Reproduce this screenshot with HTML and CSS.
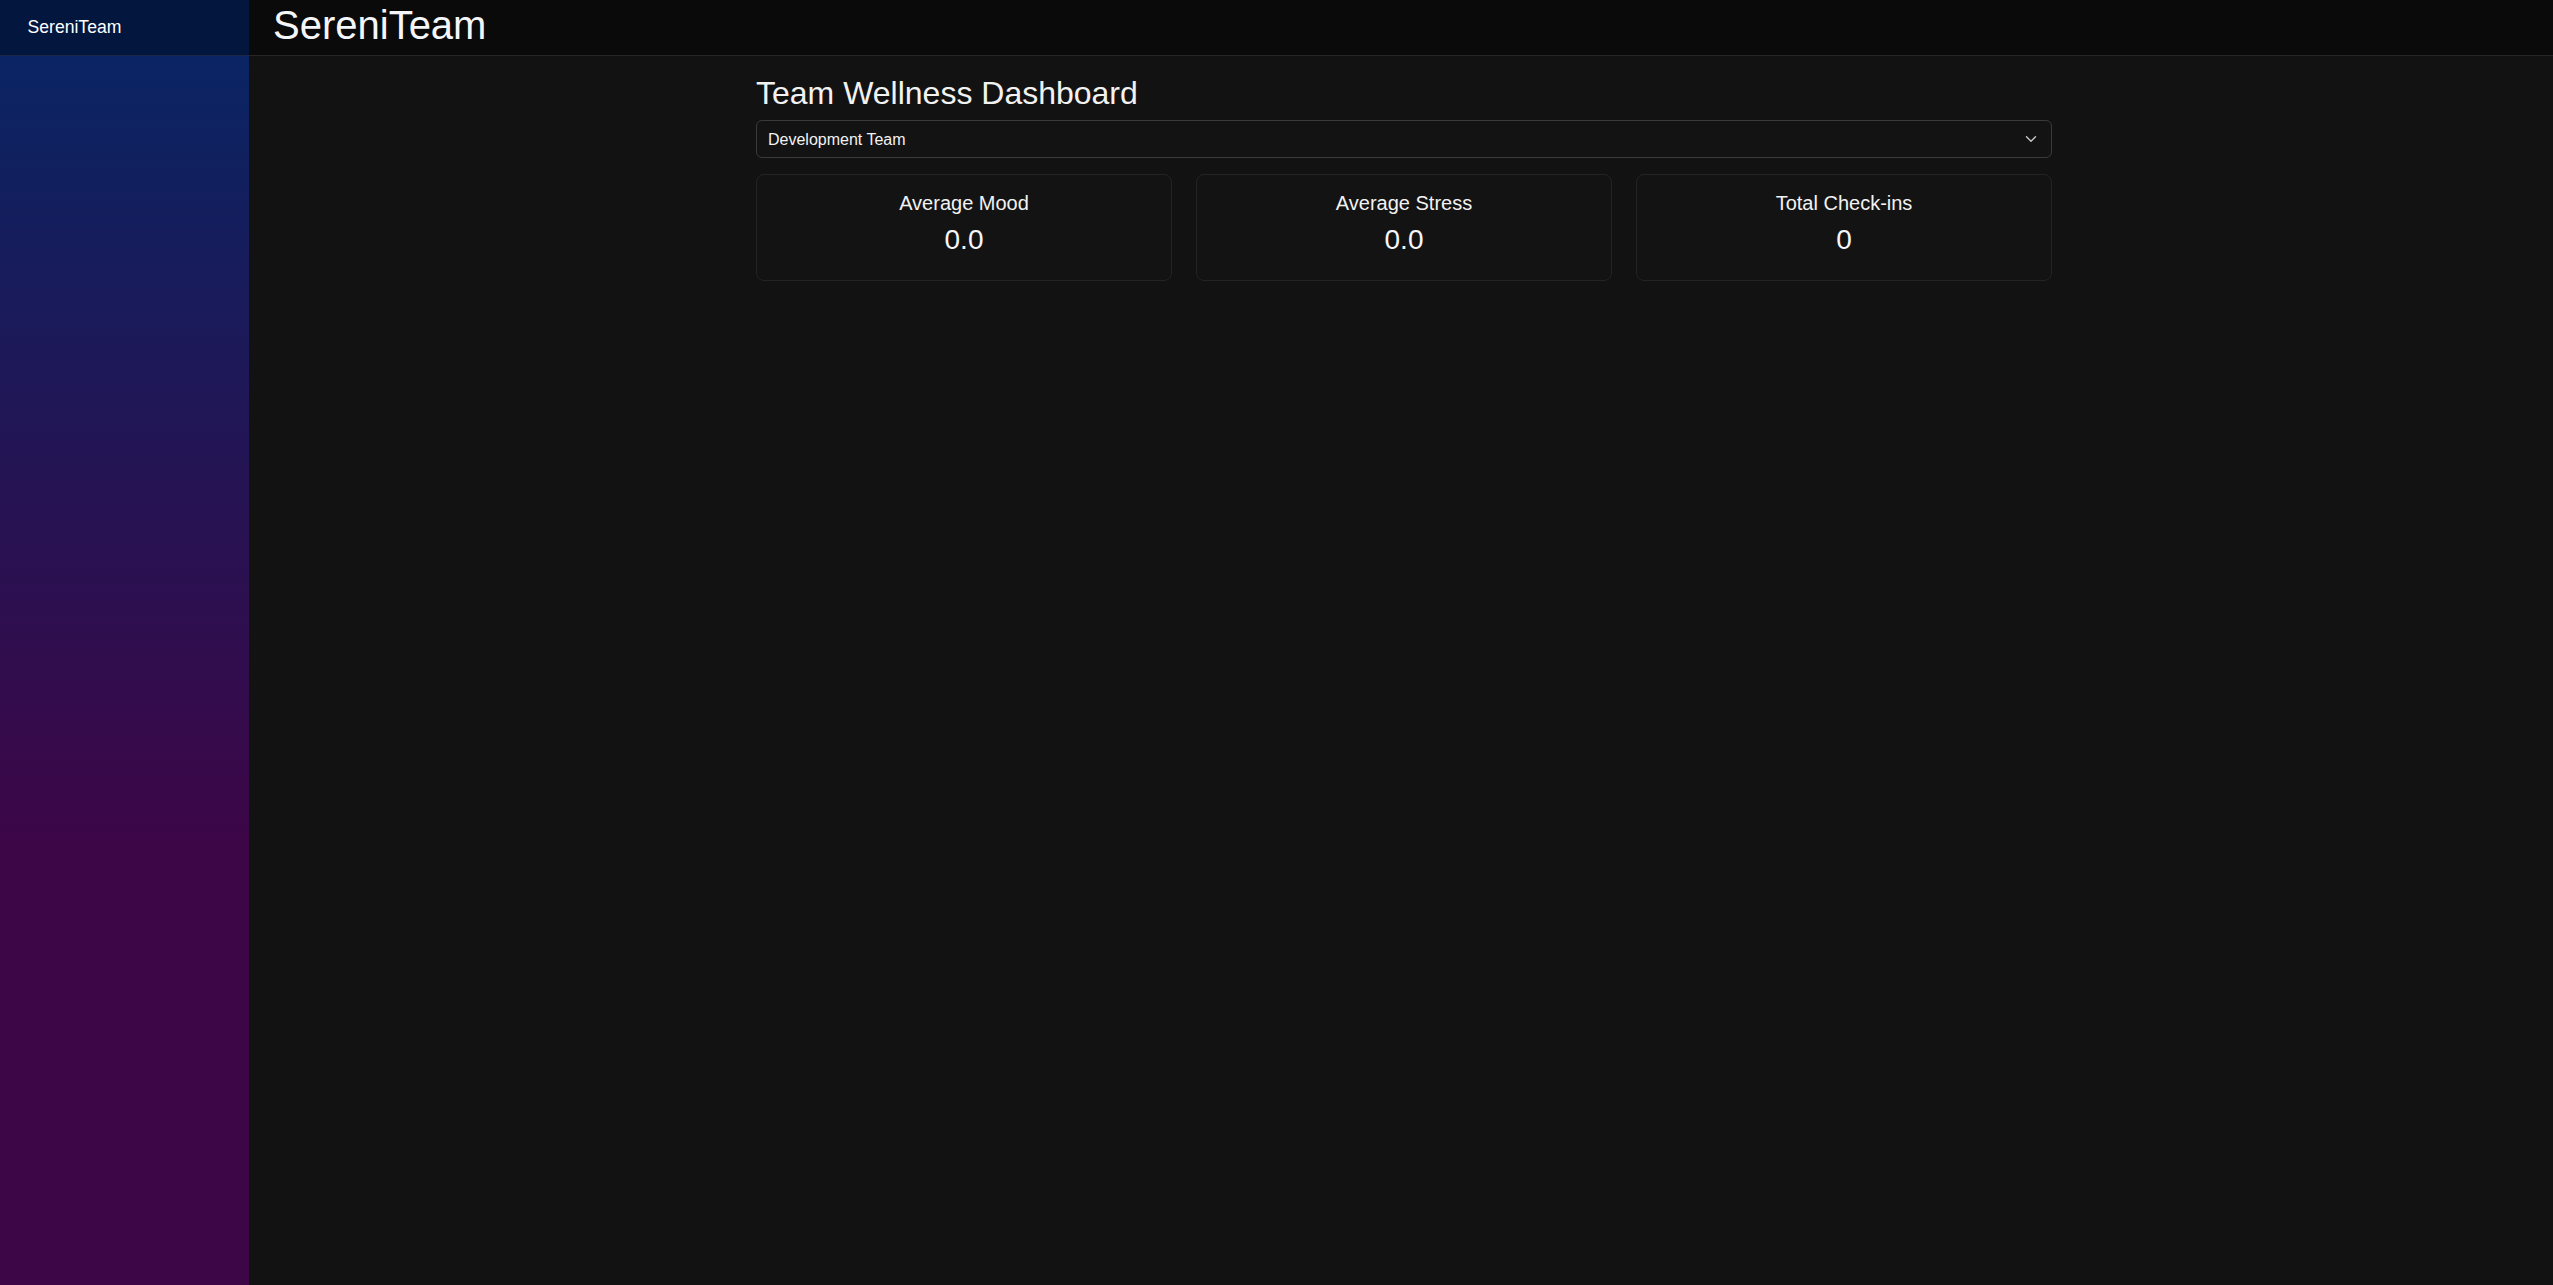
FILE: index.html
```html
<!DOCTYPE html>
<html lang="en">
<head>
<meta charset="utf-8">
<title>SereniTeam</title>
<link rel="stylesheet" href="styles.css">
</head>
<body>
<div class="app">
  <aside class="sidebar">
    <div class="sidebar-brand">SereniTeam</div>
    <nav class="sidebar-nav"></nav>
  </aside>
  <div class="main">
    <header class="topbar">
      <h1 class="topbar-title">SereniTeam</h1>
    </header>
    <main class="content">
      <div class="container">
        <h1 class="page-title">Team Wellness Dashboard</h1>
        <div class="select-wrap">
          <select class="team-select">
            <option>Development Team</option>
            <option>Design Team</option>
            <option>Marketing Team</option>
          </select>
          <svg class="chevron" width="12" height="8" viewBox="0 0 12 8" aria-hidden="true">
            <path d="M1.5 1.8 L6 6.2 L10.5 1.8" fill="none" stroke="#c8c8c8" stroke-width="1.4" stroke-linecap="round" stroke-linejoin="round"/>
          </svg>
        </div>
        <div class="stats">
          <div class="card">
            <div class="card-label">Average Mood</div>
            <div class="card-value">0.0</div>
          </div>
          <div class="card">
            <div class="card-label">Average Stress</div>
            <div class="card-value">0.0</div>
          </div>
          <div class="card">
            <div class="card-label">Total Check-ins</div>
            <div class="card-value">0</div>
          </div>
        </div>
      </div>
    </main>
  </div>
</div>
</body>
</html>
```

FILE: styles.css
```css
* {
  box-sizing: border-box;
}

html, body {
  margin: 0;
  padding: 0;
  height: 100%;
}

body {
  background: #121212;
  color: #f2f2f2;
  font-family: "Liberation Sans", Arial, sans-serif;
}

.app {
  display: flex;
  min-height: 100vh;
}

.sidebar {
  width: 249px;
  flex: 0 0 249px;
  display: flex;
  flex-direction: column;
  background: #3c0647;
}

.sidebar-brand {
  height: 56px;
  flex: 0 0 56px;
  padding: 0 0 1px 27.5px;
  display: flex;
  align-items: center;
  background: #03173e;
  border-bottom: 1px solid #1b2646;
  color: #ffffff;
  font-size: 17.6px;
}

.sidebar-nav {
  flex: 1;
  background: linear-gradient(180deg, #0a2463 0px, #3c0647 785px, #3c0647 100%);
}

.main {
  flex: 1;
  display: flex;
  flex-direction: column;
  min-width: 0;
}

.topbar {
  height: 56px;
  flex: 0 0 56px;
  background: #0a0a0a;
  border-bottom: 1px solid #262626;
  padding: 5px 24px 0;
  display: flex;
  align-items: flex-start;
}

.topbar-title {
  margin: 0;
  font-size: 40px;
  font-weight: 400;
  line-height: 1;
  color: #f4f6fa;
}

.content {
  flex: 1;
  padding: 19px 0 0 6px;
}

.container {
  max-width: 1296px;
  margin: 0 auto;
}

.page-title {
  margin: 0 0 8px;
  font-size: 32px;
  font-weight: 400;
  line-height: normal;
  color: #f2f2f2;
}

.select-wrap {
  position: relative;
  margin-bottom: 16px;
}

.team-select {
  appearance: none;
  -webkit-appearance: none;
  display: block;
  width: 100%;
  height: 38px;
  padding: 0 40px 0 11px;
  background: #131313;
  color: #f2f2f2;
  border: 1px solid #3a3a3a;
  border-radius: 6px;
  font-family: "Liberation Sans", Arial, sans-serif;
  font-size: 16px;
  outline: none;
}

.chevron {
  position: absolute;
  right: 15px;
  top: 15px;
  pointer-events: none;
}

.stats {
  display: grid;
  grid-template-columns: repeat(3, 1fr);
  gap: 24px;
}

.card {
  border: 1px solid #242424;
  border-radius: 8px;
  background: #131313;
  padding: 17px 16px 16px;
  text-align: center;
}

.card-label {
  font-size: 20px;
  line-height: 23px;
  margin-bottom: 10px;
  color: #f2f2f2;
}

.card-value {
  font-size: 28px;
  line-height: 30px;
  margin-bottom: 9px;
  color: #f4f6fa;
}
```
